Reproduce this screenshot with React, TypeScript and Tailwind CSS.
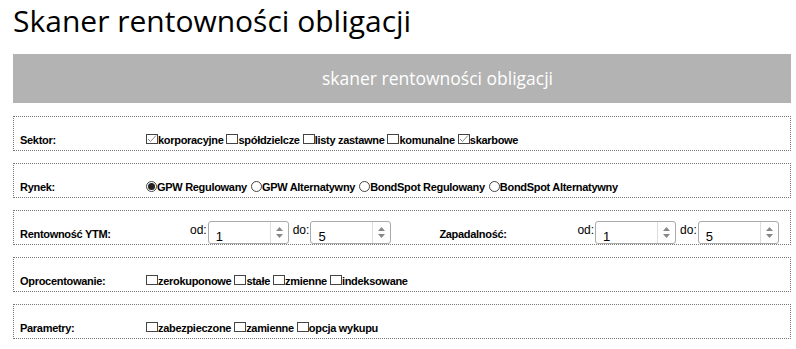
import React from "react";

const label =
  "font-['Liberation_Sans',Arial,sans-serif] font-bold text-[11px] leading-[13px] tracking-[-0.3px] text-black";

const Check = ({ on }: { on?: boolean }) => (
  <span className="mb-[3px] inline-flex h-[10px] w-[12px] shrink-0 items-center justify-center border border-[#444] bg-white">
    {on && (
      <svg width="10" height="8" viewBox="0 0 10 8">
        <path d="M1 4 L3.5 6.5 L9 0.5" fill="none" stroke="#888" strokeWidth="1" />
      </svg>
    )}
  </span>
);

const Radio = ({ on }: { on?: boolean }) => (
  <span className="mb-[2px] inline-flex h-[11px] w-[11px] shrink-0 items-center justify-center rounded-full border border-[#444] bg-white">
    {on && <span className="h-[7px] w-[7px] rounded-full bg-[#222]" />}
  </span>
);

const Opt = ({ text, on, radio }: { text: string; on?: boolean; radio?: boolean }) => (
  <span className={`inline-flex items-end ${radio ? "mr-[4px]" : "mr-[3px]"}`}>
    {radio ? <Radio on={on} /> : <Check on={on} />}
    <span className={label}>{text}</span>
  </span>
);

const Num = ({ value }: { value: string }) => (
  <span className="inline-flex h-[23px] w-[81px] shrink-0 items-stretch rounded-[3px] border border-[#aaa] bg-white">
    <span className="flex flex-1 items-end pl-[7px] font-['Liberation_Sans',Arial,sans-serif] text-[13px] leading-[13px] text-black">
      {value}
    </span>
    <span className="flex w-[18px] flex-col items-center justify-center gap-[3px] border-l border-[#ddd]">
      <svg width="7" height="4" viewBox="0 0 7 4">
        <path d="M0 4 L3.5 0 L7 4 Z" fill="#888" />
      </svg>
      <svg width="7" height="4" viewBox="0 0 7 4">
        <path d="M0 0 L3.5 4 L7 0 Z" fill="#888" />
      </svg>
    </span>
  </span>
);

const Small = ({ children }: { children: React.ReactNode }) => (
  <span className="mb-[7px] mr-[1px] font-['Liberation_Sans',Arial,sans-serif] text-[12px] leading-[14px] text-black">
    {children}
  </span>
);

const Row = ({ title, children }: { title: string; children: React.ReactNode }) => (
  <div className="flex h-[35px] items-end border border-dotted border-[#777] pb-[3px] pl-[6px]">
    <span className={`${label} w-[126px] shrink-0`}>{title}</span>
    <div className="flex items-end">{children}</div>
  </div>
);

const Range = () => (
  <div className="flex items-end">
    <Small>od:</Small>
    <Num value="1" />
    <span className="ml-[4px]" />
    <Small>do:</Small>
    <Num value="5" />
  </div>
);

export default function App() {
  return (
    <div className="h-[349px] w-[796px] overflow-hidden bg-white pl-[13px] pr-[5px]">
      <h1 className="pt-[1px] font-['Open_Sans',sans-serif] text-[30px] leading-[40px] text-black">
        Skaner rentowności obligacji
      </h1>
      <div className="mt-[13px] flex h-[49px] items-center justify-center bg-[#b3b3b3] pl-[71px] font-['Open_Sans',sans-serif] text-[17.5px] text-white">
        skaner rentowności obligacji
      </div>
      <div className="mt-[13px] flex flex-col gap-[12px]">
        <Row title="Sektor:">
          <Opt text="korporacyjne" on />
          <Opt text="spółdzielcze" />
          <Opt text="listy zastawne" />
          <Opt text="komunalne" />
          <Opt text="skarbowe" on />
        </Row>
        <Row title="Rynek:">
          <Opt text="GPW Regulowany" radio on />
          <Opt text="GPW Alternatywny" radio />
          <Opt text="BondSpot Regulowany" radio />
          <Opt text="BondSpot Alternatywny" radio />
        </Row>
        <div className="flex h-[35px] items-end border border-dotted border-[#777] pb-0 pl-[6px]">
          <span className={`${label} mb-[3px] w-[170px] shrink-0`}>Rentowność YTM:</span>
          <Range />
          <span className={`${label} mb-[3px] ml-[48px] w-[138px] shrink-0`}>Zapadalność:</span>
          <Range />
        </div>
        <Row title="Oprocentowanie:">
          <Opt text="zerokuponowe" />
          <Opt text="stałe" />
          <Opt text="zmienne" />
          <Opt text="indeksowane" />
        </Row>
        <Row title="Parametry:">
          <Opt text="zabezpieczone" />
          <Opt text="zamienne" />
          <Opt text="opcja wykupu" />
        </Row>
      </div>
    </div>
  );
}
